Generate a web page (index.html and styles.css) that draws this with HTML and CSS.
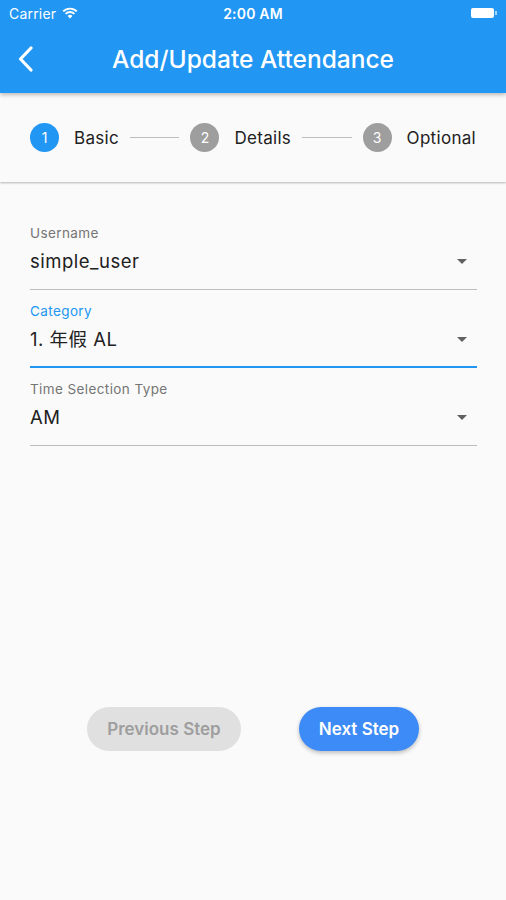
FILE: index.html
```html
<!DOCTYPE html>
<html lang="en">
<head>
  <meta charset="UTF-8">
  <meta name="viewport" content="width=device-width, initial-scale=1.0">
  <link rel="stylesheet" href="styles.css">
  <title>Add/Update Attendance</title>
</head>
<body>

<header class="appbar">
  <div class="statusbar">
    <div class="carrier">
      Carrier
      <svg class="wifi" width="16" height="12" viewBox="0 0 16 12">
        <path d="M8 11.5 L5.6 8.9 A3.4 3.4 0 0 1 10.4 8.9 Z" fill="#fff"/>
        <path d="M3.6 6.9 A6.2 6.2 0 0 1 12.4 6.9" stroke="#fff" stroke-width="1.9" fill="none"/>
        <path d="M1.2 4.4 A9.6 9.6 0 0 1 14.8 4.4" stroke="#fff" stroke-width="1.9" fill="none"/>
      </svg>
    </div>
    <div class="clock">2:00 AM</div>
    <div class="battery">
      <span class="battery-body"></span>
      <span class="battery-nub"></span>
    </div>
  </div>
  <div class="toolbar">
    <button class="back">
      <svg width="16" height="26" viewBox="0 0 16 26">
        <path d="M13 2 L2.5 13 L13 24" stroke="#fff" stroke-width="3.2" fill="none" stroke-linecap="round" stroke-linejoin="round"/>
      </svg>
    </button>
    <h1>Add/Update Attendance</h1>
  </div>
</header>

<nav class="stepper">
  <div class="step">
    <span class="step-num active">1</span>
    <span class="step-title">Basic</span>
  </div>
  <span class="step-line"></span>
  <div class="step">
    <span class="step-num">2</span>
    <span class="step-title">Details</span>
  </div>
  <span class="step-line"></span>
  <div class="step">
    <span class="step-num">3</span>
    <span class="step-title">Optional</span>
  </div>
</nav>

<form class="fields">
  <div class="field">
    <label>Username</label>
    <div class="value">simple_user<span class="arrow"></span></div>
  </div>
  <div class="field focused">
    <label>Category</label>
    <div class="value">1. 年假 AL<span class="arrow"></span></div>
  </div>
  <div class="field">
    <label>Time Selection Type</label>
    <div class="value">AM<span class="arrow"></span></div>
  </div>
</form>

<div class="actions">
  <button type="button" class="btn disabled">Previous Step</button>
  <button type="button" class="btn primary">Next Step</button>
</div>

</body>
</html>
```

FILE: styles.css
```css
body {
  margin: 0;
  height: 900px;
  background-color: #fafafa;
  font-family: Inter, "Noto Sans CJK TC", sans-serif;
  color: #212121;
}

.appbar {
  background-color: #2196f3;
  color: #fff;
  box-shadow: 0 2px 4px rgba(0, 0, 0, 0.25);
  position: relative;
  z-index: 2;
}

.statusbar {
  height: 26px;
  display: flex;
  align-items: center;
  justify-content: space-between;
  padding: 0 9px;
  font-size: 14px;
}

.carrier {
  display: flex;
  align-items: center;
  gap: 6px;
  width: 90px;
  letter-spacing: 0.2px;
}

.clock {
  font-weight: 600;
  letter-spacing: 0.2px;
}

.battery {
  width: 90px;
  display: flex;
  justify-content: flex-end;
  align-items: center;
}

.battery-body {
  width: 23px;
  height: 10px;
  background-color: #fff;
  border-radius: 2px;
}

.battery-nub {
  width: 2px;
  height: 4px;
  background-color: rgba(255, 255, 255, 0.6);
  margin-left: 1px;
}

.toolbar {
  height: 67px;
  display: flex;
  align-items: center;
  justify-content: center;
  position: relative;
}

.back {
  position: absolute;
  left: 18px;
  top: 20px;
  border: none;
  background: none;
  padding: 0;
}

.toolbar h1 {
  margin: 0;
  font-size: 24.5px;
  font-weight: 500;
  margin-top: -2px;
}

.stepper {
  height: 89px;
  display: flex;
  align-items: center;
  padding: 0 30px;
  background-color: #fafafa;
  box-shadow: 0 1px 2px rgba(0, 0, 0, 0.28);
  position: relative;
  z-index: 1;
}

.step {
  display: flex;
  align-items: center;
  gap: 15px;
}

.step-num {
  width: 29px;
  height: 29px;
  border-radius: 50%;
  background-color: #9e9e9e;
  color: #fff;
  font-size: 14px;
  display: flex;
  align-items: center;
  justify-content: center;
}

.step-num.active {
  background-color: #2196f3;
}

.step-title {
  font-size: 17px;
  letter-spacing: 0.3px;
  color: #212121;
}

.step-line {
  flex: 1;
  height: 1px;
  background-color: #bdbdbd;
  margin: 0 11px;
}

.fields {
  padding: 30px 29px 0 30px;
}

.field {
  padding-top: 13px;
  border-bottom: 1px solid #bdbdbd;
}

.field label {
  display: block;
  font-size: 13.5px;
  letter-spacing: 0.4px;
  line-height: 16px;
  color: #757575;
}

.value {
  display: flex;
  align-items: center;
  justify-content: space-between;
  font-size: 18.5px;
  letter-spacing: 0.5px;
  line-height: 24px;
  margin-top: 8px;
  margin-bottom: 16px;
}

.arrow {
  width: 0;
  height: 0;
  border-left: 5.5px solid transparent;
  border-right: 5.5px solid transparent;
  border-top: 5.5px solid #616161;
  margin-right: 10px;
}

.field.focused {
  border-bottom: 2px solid #2196f3;
}

.field.focused label {
  color: #2196f3;
}

.field.focused .value {
  margin-bottom: 15px;
}

.actions {
  display: flex;
  justify-content: center;
  gap: 58px;
  margin-top: 261px;
}

.btn {
  height: 44px;
  border: none;
  border-radius: 22px;
  font-family: Inter, sans-serif;
  font-size: 17px;
  font-weight: 600;
  padding: 0 10px;
}

.btn.disabled {
  background-color: #e0e0e0;
  color: #9e9e9e;
  width: 154px;
}

.btn.primary {
  background-color: #3d8bf6;
  color: #fff;
  width: 120px;
  box-shadow: 0 2px 4px rgba(0, 0, 0, 0.25);
}
```
